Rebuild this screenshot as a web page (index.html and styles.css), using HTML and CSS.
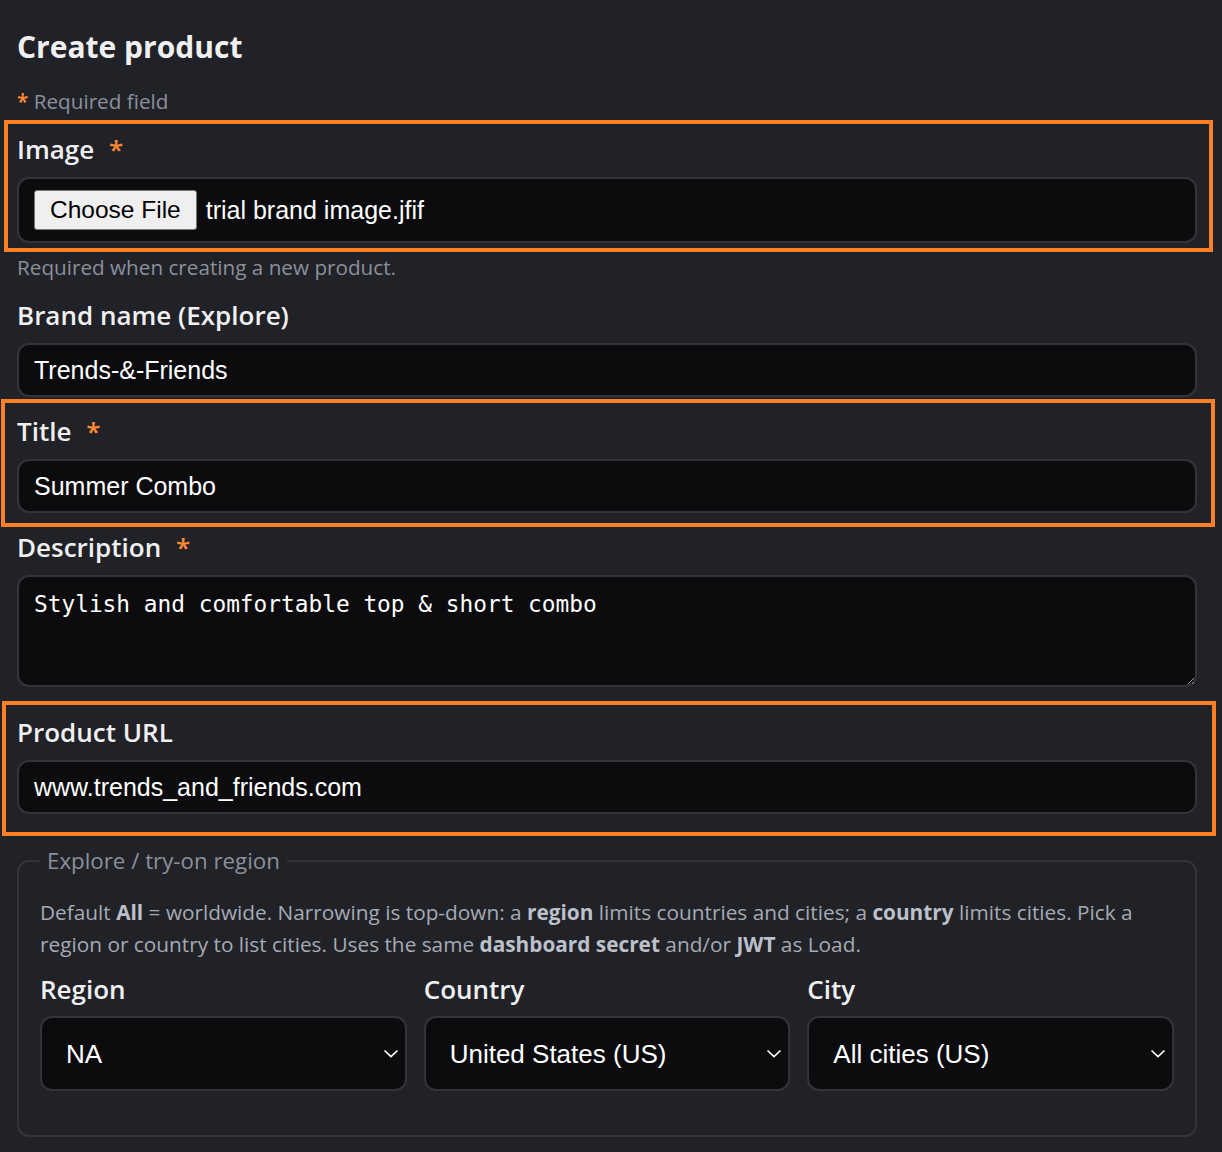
FILE: index.html
```html
<!DOCTYPE html>
<html lang="en">
<head>
    <meta charset="UTF-8">
    <meta name="viewport" content="width=device-width, initial-scale=1.0">
    <title>Create product</title>
    <link rel="stylesheet" href="styles.css">
</head>
<body>
    <div class="container">
        <h1>Create product</h1>
        <p class="required-note"><span class="star">*</span> Required field</p>

        <div class="field highlight hl-image">
            <label class="field-label">Image <span class="star">*</span></label>
            <div class="input file-input">
                <button class="file-btn" type="button">Choose File</button>
                <span class="file-name">trial brand image.jfif</span>
            </div>
        </div>
        <p class="hint">Required when creating a new product.</p>

        <div class="field">
            <label class="field-label" for="brand">Brand name (Explore)</label>
            <input class="input" id="brand" type="text" value="Trends-&amp;-Friends">
        </div>

        <div class="field highlight hl-title">
            <label class="field-label" for="title">Title <span class="star">*</span></label>
            <input class="input" id="title" type="text" value="Summer Combo">
        </div>

        <div class="field">
            <label class="field-label" for="desc">Description <span class="star">*</span></label>
            <textarea class="input textarea" id="desc">Stylish and comfortable top &amp; short combo</textarea>
        </div>

        <div class="field field-after-text highlight hl-url">
            <label class="field-label" for="url">Product URL</label>
            <input class="input" id="url" type="text" value="www.trends_and_friends.com">
        </div>

        <fieldset class="region-box">
            <legend>Explore / try-on region</legend>
            <p class="region-help">Default <b>All</b> = worldwide. Narrowing is top-down: a <b>region</b> limits countries and cities; a <b>country</b> limits cities. Pick a region or country to list cities. Uses the same <b>dashboard secret</b> and/or <b>JWT</b> as Load.</p>
            <div class="region-grid">
                <div class="region-col">
                    <label class="field-label" for="region">Region</label>
                    <div class="select-wrap">
                        <select id="region" class="select"><option>NA</option></select>
                        <svg class="chevron" width="16" height="9" viewBox="0 0 16 9"><path d="M1.5 1.5l6.5 6 6.5-6" fill="none" stroke="#fff" stroke-width="1.7"/></svg>
                    </div>
                </div>
                <div class="region-col">
                    <label class="field-label" for="country">Country</label>
                    <div class="select-wrap">
                        <select id="country" class="select"><option>United States (US)</option></select>
                        <svg class="chevron" width="16" height="9" viewBox="0 0 16 9"><path d="M1.5 1.5l6.5 6 6.5-6" fill="none" stroke="#fff" stroke-width="1.7"/></svg>
                    </div>
                </div>
                <div class="region-col">
                    <label class="field-label" for="city">City</label>
                    <div class="select-wrap">
                        <select id="city" class="select"><option>All cities (US)</option></select>
                        <svg class="chevron" width="16" height="9" viewBox="0 0 16 9"><path d="M1.5 1.5l6.5 6 6.5-6" fill="none" stroke="#fff" stroke-width="1.7"/></svg>
                    </div>
                </div>
            </div>
        </fieldset>
    </div>
</body>
</html>
```

FILE: styles.css
```css
body {
    margin: 0;
    background-color: #212227;
    color: #f0f0f2;
    font-family: 'Open Sans', 'Noto Sans', sans-serif;
}

.container {
    width: 1180px;
    padding: 27px 0 0 17px;
}

h1 {
    margin: 0;
    font-size: 30px;
    font-weight: 700;
    line-height: 40px;
}

.star {
    color: #ff8a33;
    font-weight: 600;
}

.required-note {
    margin: 20px 0 0;
    font-size: 20.7px;
    line-height: 28px;
    color: #8b909c;
}

.field {
    display: flex;
    flex-direction: column;
    gap: 10px;
    margin-top: 16px;
}

.field-after-text {
    margin-top: 27px;
}

.field-label {
    font-size: 26px;
    font-weight: 600;
    line-height: 36px;
}

.field-label .star {
    margin-left: 8px;
}

/* orange review boxes drawn over the form */
.highlight {
    position: relative;
}

.highlight::after {
    content: '';
    position: absolute;
    border: 4px solid #ff7f27;
    pointer-events: none;
}

.hl-image::after {
    top: -11px;
    bottom: -9px;
    left: -13px;
    right: -16px;
}

.hl-title::after {
    top: -14px;
    bottom: -14px;
    left: -16px;
    right: -18px;
}

.hl-url::after {
    top: -13px;
    bottom: -22px;
    left: -15px;
    right: -19px;
}

.input {
    box-sizing: border-box;
    width: 100%;
    height: 54px;
    margin: 0;
    padding: 0 15px;
    background-color: #0c0c0f;
    color: #fff;
    border: 2px solid #333438;
    border-radius: 12px;
    font-family: 'Liberation Sans', Arial, sans-serif;
    font-size: 25px;
    outline: none;
}

.file-input {
    display: flex;
    align-items: center;
    gap: 9px;
    height: 66px;
}

.file-btn {
    height: 40px;
    padding: 0 15px;
    background-color: #efefef;
    color: #000;
    border: 1px solid #767676;
    border-radius: 3px;
    font-family: 'Liberation Sans', Arial, sans-serif;
    font-size: 24.5px;
}

.hint {
    margin: 10px 0 0;
    font-size: 20.7px;
    line-height: 28px;
    color: #8b909c;
}

.textarea {
    display: block;
    height: 112px;
    padding: 12px 15px;
    font-family: 'DejaVu Sans Mono', monospace;
    font-size: 22.8px;
    line-height: 30px;
    resize: vertical;
}

.region-box {
    margin: 31px 0 0;
    padding: 20px 21px 44px;
    border: 2px solid #333438;
    border-radius: 12px;
}

.region-box legend {
    padding: 0 7px;
    margin-left: 0;
    font-size: 22.3px;
    color: #8b909c;
}

.region-help {
    margin: 0;
    font-size: 20.8px;
    line-height: 32px;
    color: #a6aab5;
}

.region-help b {
    color: #bcc0ca;
}

.region-grid {
    display: grid;
    grid-template-columns: repeat(3, 1fr);
    gap: 17px;
    margin-top: 11px;
}

.region-col {
    display: flex;
    flex-direction: column;
    gap: 9px;
}

.select-wrap {
    position: relative;
}

.select {
    box-sizing: border-box;
    width: 100%;
    height: 75px;
    padding: 0 24px;
    appearance: none;
    background-color: #0c0c0f;
    color: #fff;
    border: 2px solid #333438;
    border-radius: 12px;
    font-family: 'Liberation Sans', Arial, sans-serif;
    font-size: 26px;
}

.chevron {
    position: absolute;
    right: 8px;
    top: 33px;
    pointer-events: none;
}
```
